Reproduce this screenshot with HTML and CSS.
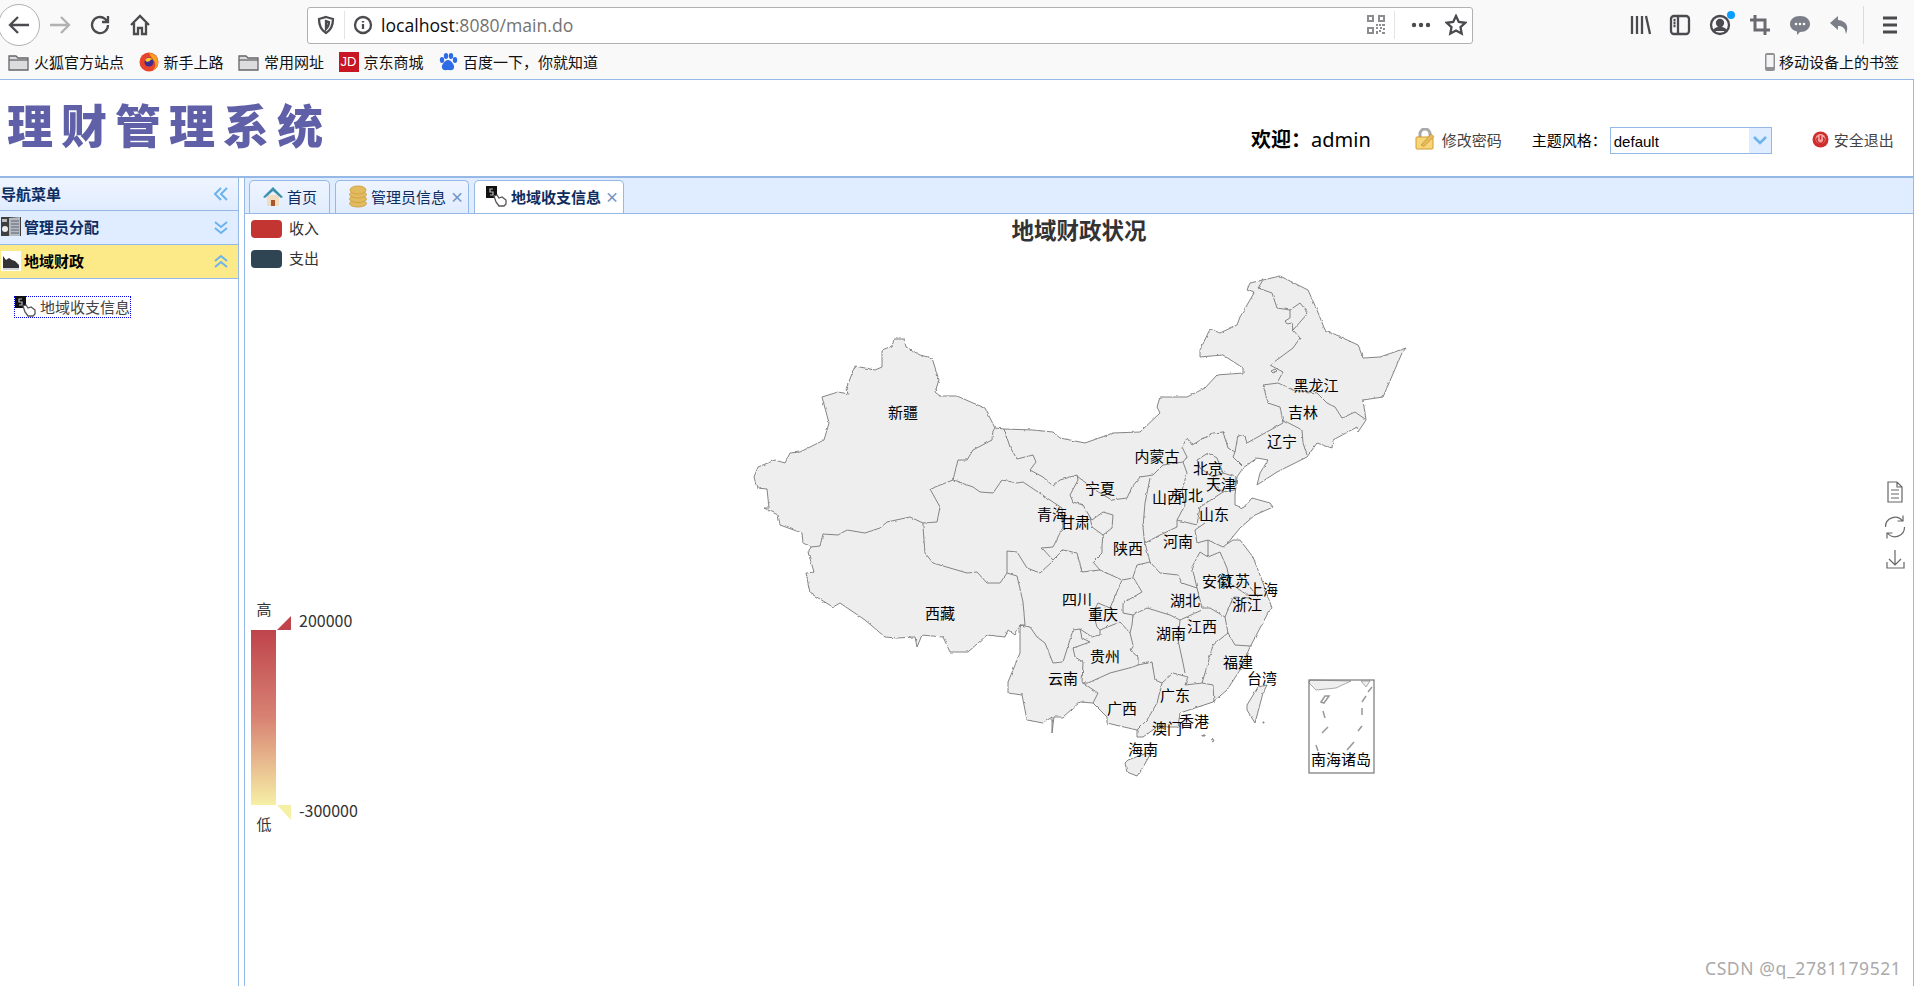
FILE: index.html
```html
<!DOCTYPE html>
<html lang="zh">
<head>
<meta charset="utf-8">
<title>理财管理系统</title>
<link rel="stylesheet" href="styles.css">
</head>
<body>
<div class="toolbar">
  <button class="backbtn"><svg width="24" height="24" viewBox="0 0 24 24" class="ic"><path d="M22 12H3M11 4l-8 8 8 8"/></svg></button>
  <svg class="tb fwd" width="24" height="24" viewBox="0 0 24 24"><path d="M2 12h19M13 4l8 8-8 8"/></svg>
  <svg class="tb reload" width="24" height="24" viewBox="0 0 24 24"><path d="M20 12a8 8 0 1 1-3-6.200L20 9M20 3v6h-6"/></svg>
  <svg class="tb home" width="24" height="24" viewBox="0 0 24 24"><path d="M3 12 12 3l9 9M6 10v11h4v-6h4v6h4V10"/></svg>
  <div class="urlbar">
    <svg class="tb shield" width="20" height="20" viewBox="0 0 20 20"><path d="M10 2l7 2c0 7-2 11-7 14C5 15 3 11 3 4zM10 6l3 1c0 3-1 5-3 7z"/></svg>
    <span class="urlsep"></span>
    <svg class="tb info" width="20" height="20" viewBox="0 0 20 20"><circle cx="10" cy="10" r="8"/><path d="M10 9v5M10 6v1.500"/></svg>
    <span class="url">localhost<span class="urlgray">:8080/main.do</span></span>
    <svg class="qr" width="20" height="22" viewBox="0 0 20 22"><path d="M1 1h7v7H1zM12 1h7v7h-7zM1 13h7v7H1zM10 10h2v2h-2zM13 10h2v2h-2zM16 10h3v2h-3zM10 13h2v2h-2zM14 13h2v2h-2zM17 14h2v2h-2zM10 17h2v3h-2zM13 16h2v2h-2zM16 18h3v2h-3z"/><path d="M3 3h3v3H3zM14 3h3v3h-3zM3 15h3v3H3z" fill="#fff"/></svg>
    <span class="urlsep sep2"></span>
    <svg class="dots" width="20" height="6" viewBox="0 0 20 6"><circle cx="3" cy="3" r="2.200"/><circle cx="10" cy="3" r="2.200"/><circle cx="17" cy="3" r="2.200"/></svg>
    <svg class="tb star" width="22" height="22" viewBox="0 0 22 22"><path d="M11 2l2.800 6 6.400.8-4.700 4.400 1.200 6.400L11 16.500 5.300 19.600l1.200-6.400L1.800 8.800 8.200 8z"/></svg>
  </div>
  <div class="tbright">
    <svg class="tb" width="24" height="24" viewBox="0 0 24 24"><path d="M4 3v18M9 3v18M14 3v18M18 3l4 18"/></svg>
    <svg class="tb" width="24" height="24" viewBox="0 0 24 24"><rect x="3" y="3" width="18" height="18" rx="3"/><path d="M10 3v18M5.500 7h2M5.500 10h2M5.500 13h2"/></svg>
    <span class="acct"><svg class="tb" width="24" height="24" viewBox="0 0 24 24"><circle cx="12" cy="12" r="9"/><circle cx="12" cy="10" r="3" class="solid"/><path d="M6 18c2-4 10-4 12 0" class="solid"/></svg><i class="acctdot"></i></span>
    <svg class="tb cropic" width="24" height="24" viewBox="0 0 24 24"><path d="M7 2v15h15M2 7h15v15"/></svg>
    <svg class="graysolid" width="24" height="24" viewBox="0 0 24 24"><path d="M12 3c6 0 10 3.500 10 8s-4 8-10 8l-3 3v-3.500C5 17.500 2 15 2 11c0-4.500 4-8 10-8z"/><circle cx="8" cy="11" r="1.300" fill="#f9f9fa"/><circle cx="12" cy="11" r="1.300" fill="#f9f9fa"/><circle cx="16" cy="11" r="1.300" fill="#f9f9fa"/></svg>
    <svg class="graysolid" width="24" height="24" viewBox="0 0 24 24"><path d="M10 3 2 10l8 7v-4c4 0 7 1 8 8 3-7 1-13-8-14z"/></svg>
    <span class="tbsep"></span>
    <svg class="tb menu" width="24" height="24" viewBox="0 0 24 24"><path d="M5 5h14M5 12h14M5 19h14"/></svg>
  </div>
</div>
<div class="bookmarks">
  <span class="bm"><svg class="fld" width="21" height="19" viewBox="0 0 21 19"><path d="M1 17V3h7l2 2h10v12z"/><path d="M1 7h19"/></svg>火狐官方站点</span>
  <span class="bm"><svg width="20" height="20" viewBox="0 0 20 20"><circle cx="10" cy="10" r="9.500" fill="#e8442b"/><path d="M10 1a9 9 0 0 1 9 9c0 4-2 7-5 8 3-3 3-7 1-9-1-2-3-4-5-8z" fill="#f9a11b"/><circle cx="10" cy="10" r="4.500" fill="#3d2c92"/><path d="M6 8c2-3 6-3 8 0-2-1-3 0-3 1l-3 1z" fill="#ffcb2b"/></svg>新手上路</span>
  <span class="bm"><svg class="fld" width="21" height="19" viewBox="0 0 21 19"><path d="M1 17V3h7l2 2h10v12z"/><path d="M1 7h19"/></svg>常用网址</span>
  <span class="bm"><span class="jd">JD</span>京东商城</span>
  <span class="bm"><svg width="20" height="20" viewBox="0 0 20 20"><g fill="#2e6be6"><ellipse cx="4" cy="8" rx="2.200" ry="3"/><ellipse cx="8" cy="4" rx="2.200" ry="3"/><ellipse cx="13" cy="4" rx="2.200" ry="3"/><ellipse cx="17" cy="8" rx="2.200" ry="3"/><path d="M10 8c3 0 7 5 6 8-1 3-4 2-6 2s-5 1-6-2c-1-3 3-8 6-8z"/></g></svg>百度一下，你就知道</span>
  <span class="bm mobile"><svg width="12" height="20" viewBox="0 0 12 20"><rect x="1" y="1" width="10" height="18" rx="2" fill="#8f8f94"/><rect x="2.500" y="3" width="7" height="12" fill="#f4f4f5"/></svg>移动设备上的书签</span>
</div>
<header class="header">
  <div class="logo">理财管理系统</div>
  <div class="welcome"><b>欢迎：</b>admin</div>
  <a class="hlink pw"><svg width="22" height="22" viewBox="0 0 22 22"><path d="M5 10V6a5 5 0 0 1 10 0v4" fill="none" stroke="#a9a9a9" stroke-width="3"/><rect x="1" y="9" width="17" height="12" rx="1" fill="#f6d679" stroke="#d39a2c"/><path d="M6 17l10-11 3 2.500-10 10z" fill="#e8b95a" stroke="#b78a2e" stroke-width=".6"/></svg>修改密码</a>
  <span class="themelabel">主题风格：</span>
  <div class="themeselect"><span class="themeval">default</span><span class="themearrow"><svg width="18" height="10" viewBox="0 0 18 10"><path d="M3 1l6 6 6-6" fill="none" stroke="#6cb3ee" stroke-width="2.500"/></svg></span></div>
  <a class="hlink exit"><svg width="17" height="17" viewBox="0 0 17 17"><circle cx="8.500" cy="8.500" r="8" fill="#cf2d2d"/><circle cx="8.500" cy="8" r="5" fill="#f3a3a3"/><path d="M5.800 6.500a3.500 3.500 0 1 0 5.400 0M8.500 4.500v4" fill="none" stroke="#c22" stroke-width="1.400"/></svg>安全退出</a>
</header>
<div class="main">
  <aside class="side">
    <div class="sidehead"><span>导航菜单</span><svg width="16" height="16" viewBox="0 0 16 16" class="chev"><path d="M8 2 2 8l6 6M14 2 8 8l6 6"/></svg></div>
    <div class="acc"><span class="accl"><svg width="20" height="19" viewBox="0 0 20 19"><rect width="20" height="19" fill="#3f3f3f"/><path d="M8 1l11-1v19H8z" fill="#b4bac2"/><path d="M10 4h8M10 7h8M10 10h8M10 13h8M10 16h8" stroke="#5f6670"/><circle cx="4" cy="12" r="3" fill="#eee"/><rect x="1" y="2" width="5" height="3" fill="#bbb"/></svg>管理员分配</span><svg width="16" height="16" viewBox="0 0 16 16" class="chev"><path d="M2 3l6 5 6-5M2 9l6 5 6-5"/></svg></div>
    <div class="acc open"><span class="accl"><svg width="20" height="20" viewBox="0 0 20 20"><rect width="20" height="20" fill="#fff"/><path d="M2 17V5l3 4 3-2 3 2 3 1 4 4v3z" fill="#333"/><path d="M2 18h16" stroke="#aaa"/></svg>地域财政</span><svg width="16" height="16" viewBox="0 0 16 16" class="chev"><path d="M2 8l6-5 6 5M2 14l6-5 6 5"/></svg></div>
    <div class="tree"><a class="treeitem"><svg width="22" height="21" viewBox="0 0 22 21"><rect x="0" y="0" width="11" height="12" fill="#111"/><path d="M7 3H4v3h3v3H4" fill="none" stroke="#bbb" stroke-width="1.200"/><path d="M8 10l3-1 2 3 3-1 4 3v4l-2 2h-5l-3-4z" fill="#fff" stroke="#555" stroke-width="1.300"/></svg><span>地域收支信息</span></a></div>
  </aside>
  <div class="splitter"></div>
  <section class="content">
    <nav class="tabs">
      <div class="tab t1"><svg width="22" height="22" viewBox="0 0 22 22"><path d="M5 10h12v11H5z" fill="#f1dcc0"/><path d="M1 12 11 2l10 10-2 1-8-7-8 7z" fill="#3a8fb0"/><rect x="9" y="15" width="4" height="6" fill="#a8542c"/></svg>首页</div>
      <div class="tab t2"><svg width="20" height="23" viewBox="0 0 20 23"><g fill="#e2bb5e" stroke="#cfa548"><ellipse cx="10" cy="18.500" rx="8.500" ry="3.500"/><ellipse cx="10" cy="14" rx="8.500" ry="3.500"/><ellipse cx="10" cy="9.500" rx="8.500" ry="3.500"/><ellipse cx="10" cy="5" rx="8" ry="4"/></g></svg>管理员信息<i class="x">×</i></div>
      <div class="tab active"><svg width="22" height="21" viewBox="0 0 22 21"><rect x="0" y="0" width="11" height="12" fill="#111"/><path d="M7 3H4v3h3v3H4" fill="none" stroke="#bbb" stroke-width="1.200"/><path d="M8 10l3-1 2 3 3-1 4 3v4l-2 2h-5l-3-4z" fill="#fff" stroke="#555" stroke-width="1.300"/></svg>地域收支信息<i class="x">×</i></div>
    </nav>
    <div class="chart">
      <svg class="mapsvg" width="1668" height="772" viewBox="245 214 1668 772">
        <defs>
          <filter id="rough" x="-2%" y="-2%" width="104%" height="104%" color-interpolation-filters="sRGB">
            <feTurbulence type="fractalNoise" baseFrequency="0.2" numOctaves="2" seed="4"/>
            <feDisplacementMap in="SourceGraphic" scale="2.500" xChannelSelector="R" yChannelSelector="G"/>
          </filter>
          <linearGradient id="vm" x1="0" y1="0" x2="0" y2="1"><stop offset="0" stop-color="#bf444c"/><stop offset=".5" stop-color="#d88273"/><stop offset="1" stop-color="#f6efa6"/></linearGradient>
        </defs>
        <g class="legend">
          <rect x="251" y="220" width="31" height="18" rx="4" fill="#c23531"/>
          <rect x="251" y="250" width="31" height="18" rx="4" fill="#2f4554"/>
          <text x="289" y="234">收入</text>
          <text x="289" y="264">支出</text>
        </g>
        <text class="charttitle" x="1079" y="239">地域财政状况</text>
        <g class="vmap">
          <rect x="251" y="630" width="25" height="175" fill="url(#vm)"/>
          <path d="M277 630 291 616V630Z" fill="#bf444c"/>
          <path d="M277 805H291V820Z" fill="#f6efa6"/>
          <text x="264" y="615" class="mid">高</text>
          <text x="264" y="830" class="mid">低</text>
          <text x="299" y="627" class="num">200000</text>
          <text x="299" y="817" class="num">-300000</text>
        </g>
        <g filter="url(#rough)" class="map">
          <path class="land" d="M995 428 985 408 973 403 957 396 940 396 935 392 939 380 932 358 920 355 906 347 904 339 894 339 892 346 882 350 882 367 875 370 855 366 846 389 849 394 838 392 822 397 829 423 824 440 800 452 790 453 785 463 775 460 758 467 754 477 757 488 767 489 769 508 764 508 778 515 780 525 802 533 803 543 811 547 808 552 814 572 806 573 810 593 833 607 840 603 865 620 885 637 897 638 915 637 917 647 922 635 943 637 950 652 968 652 987 635 1005 637 1008 630 1015 635 1020 625 1020 653 1008 682 1008 693 1022 695 1027 720 1043 723 1052 717 1052 733 1054 717 1063 717 1080 702 1093 703 1107 717 1107 723 1137 730 1137 737 1143 737 1157 727 1178 727 1180 713 1213 702 1227 690 1240 670 1250 647 1268 613 1272 608 1263 583 1253 557 1240 540 1233 540 1227 544 1240 528 1255 515 1273 507 1270 503 1252 498 1243 508 1235 505 1235 495 1237 477 1243 468 1257 458 1268 460 1260 473 1257 485 1277 472 1307 457 1317 443 1332 448 1333 440 1357 427 1358 432 1366 420 1363 400 1383 397 1402 353 1406 348 1380 357 1363 358 1358 345 1330 332 1325 330 1317 310 1308 290 1280 276 1263 280 1250 283 1247 290 1254 293 1240 317 1237 325 1220 333 1210 329 1200 350 1200 357 1223 355 1243 368 1243 373 1217 375 1205 388 1187 397 1160 397 1157 407 1160 413 1140 432 1113 433 1085 443 1060 438 1053 432 1033 430 1004 429Z"/>
          <path class="land" d="M1267 685 1258 687 1247 705 1247 710 1255 723 1263 693Z"/>
          <path class="land" d="M1128 760 1147 753 1150 755 1143 767 1137 776 1127 772 1125 763Z"/>
          <path class="land" d="M1212 739l2 1-1 2-2-1zM1203 735l2 0 0 1-2 0zM1262 722l2 0 0 1-2 0z"/>
          <path class="line" d="M995 428 993 431 992 440 973 450 967 460 958 460 953 480 930 489 940 507 937 522 923 523 910 517 887 522 880 528 865 533 847 530 838 535 823 534 820 546 811 547"/>
          <path class="line" d="M923 523 923 527 925 553 933 563 967 573 977 572 987 583 1000 583 1007 573 1017 576 1023 602 1025 625 1020 625"/>
          <path class="line" d="M1004 429 1010 447 1017 459 1033 455 1036 462 1030 470 1043 477 1053 486 1060 480 1077 475 1078 480 1070 495 1073 502 1083 505 1090 517 1092 527 1103 535"/>
          <path class="line" d="M1077 476 1095 490 1112 500 1127 498 1132 487 1140 477 1153 475 1163 465 1183 462 1187 457 1182 447 1187 438 1192 445 1213 433 1223 432 1228 448 1235 452 1238 435 1245 437 1247 443 1283 423"/>
          <path class="line" d="M1283 420 1302 430 1303 443 1307 455M1235 452 1233 457 1243 467"/>
          <path class="line" d="M1283 422 1280 407 1268 403 1263 385 1278 383 1293 390 1317 393 1327 403 1335 407 1342 418 1355 412 1365 419"/>
          <path class="line" d="M1278 381 1283 372 1270 365 1293 348 1300 338 1293 330 1308 313 1300 303 1290 310 1277 308 1272 293 1258 288 1263 280"/>
          <path class="line" d="M1290 310 1290 318 1285 321 1287 324 1292 323 1293 330M1271 371l4-2 2 2-4 2z"/>
          <path class="line" d="M1208 453 1217 458 1223 473 1213 477 1200 468 1197 460ZM1223 473 1236 477 1235 490 1223 492 1213 485 1213 477"/>
          <path class="line" d="M1183 462 1187 473 1182 490 1185 505 1177 520 1177 527 1160 535 1145 543M1150 478 1145 503 1143 527 1145 547"/>
          <path class="line" d="M1177 520 1197 525 1200 507 1223 492M1205 523 1195 530 1197 543 1208 540 1223 547 1227 544"/>
          <path class="line" d="M1145 543 1150 562 1160 573 1178 575 1182 583 1197 588 1192 567 1200 552 1208 557 1208 540"/>
          <path class="line" d="M1208 557 1220 552 1227 568 1230 583 1247 595 1263 595M1233 597 1250 598M1250 587 1258 597"/>
          <path class="line" d="M1197 588 1202 608 1210 608 1225 617 1233 598M1225 617 1228 633 1213 645 1208 663 1202 683 1213 685 1214 702M1228 633 1235 645 1250 646"/>
          <path class="line" d="M1202 683 1185 685 1188 677 1173 673 1162 683 1155 680 1152 662 1138 665 1138 657 1130 650 1133 645 1130 633"/>
          <path class="line" d="M1180 620 1178 640 1183 663 1185 673M1180 620 1202 610M1180 620 1170 615 1147 608 1133 615 1123 613 1123 603 1142 592 1133 577 1137 565 1150 562"/>
          <path class="line" d="M1133 615 1132 625 1130 633 1120 622 1100 630 1100 635 1092 637 1080 629 1073 630 1063 662 1053 663 1045 643 1037 637 1030 627 1020 625"/>
          <path class="line" d="M1133 578 1122 580 1110 608 1098 603 1093 613 1097 627 1100 630M1122 580 1100 570 1082 572 1077 553 1063 550 1053 560 1042 548 1053 547 1063 527 1062 508 1035 490 1023 482 1017 483 1002 480 993 493 980 492 973 487 953 480"/>
          <path class="line" d="M1007 573 1007 551 1017 552 1027 568 1040 573 1053 561M1100 570 1093 562 1102 553 1102 545 1103 535 1112 528 1113 515 1103 512 1092 520 1090 517"/>
          <path class="line" d="M1080 629 1082 638 1090 642 1073 648 1075 657 1083 662 1082 683 1088 683 1110 673 1133 667 1138 665M1083 683 1098 693 1093 703M1162 683 1157 703 1147 720 1137 730"/>
        </g>
        <g class="inset">
          <path d="M1309 683 1316 690 1336 688 1351 681 1310 680ZM1361 681 1366 687 1370 681Z" fill="#eee" stroke="#888" stroke-width=".7"/>
          <rect x="1309" y="680" width="65" height="93" fill="none" stroke="#777" stroke-width="1.200"/>
          <path d="M1321 702 1325 696 1329 696 1324 703ZM1323 711l2 7M1322 733l6-6M1316 745l2 6M1347 750l7-8M1358 731l4-5M1362 708v7M1362 702l4-6M1368 692l4-5" fill="none" stroke="#999" stroke-width="1.500"/>
        </g>
        <g class="labels">
          <text x="903" y="418">新疆</text><text x="940" y="619">西藏</text><text x="1052" y="520">青海</text><text x="1075" y="528">甘肃</text>
          <text x="1077" y="605">四川</text><text x="1100" y="494">宁夏</text><text x="1157" y="462">内蒙古</text><text x="1128" y="554">陕西</text>
          <text x="1167" y="503">山西</text><text x="1188" y="501">河北</text><text x="1208" y="474">北京</text><text x="1221" y="490">天津</text>
          <text x="1214" y="520">山东</text><text x="1178" y="547">河南</text><text x="1282" y="447">辽宁</text><text x="1303" y="418">吉林</text>
          <text x="1316" y="391">黑龙江</text><text x="1217" y="587">安徽</text><text x="1235" y="586">江苏</text><text x="1263" y="595">上海</text>
          <text x="1247" y="610">浙江</text><text x="1185" y="606">湖北</text><text x="1103" y="620">重庆</text><text x="1171" y="639">湖南</text>
          <text x="1202" y="632">江西</text><text x="1105" y="662">贵州</text><text x="1238" y="668">福建</text><text x="1262" y="684">台湾</text>
          <text x="1063" y="684">云南</text><text x="1175" y="701">广东</text><text x="1122" y="714">广西</text><text x="1194" y="727">香港</text>
          <text x="1167" y="734">澳门</text><text x="1143" y="755">海南</text><text x="1341" y="765">南海诸岛</text>
        </g>
        <g class="toolbox">
          <path d="M1888 482h9l5 5v15h-14zM1897 482v5h5M1891 490h8M1891 494h8M1891 498h8"/>
          <path d="M1885.500 527a9.500 9.500 0 0 1 17-6M1904.500 527a9.500 9.500 0 0 1-17 6M1903 515.500v5.500h-5.500M1887 538.500v-5.500h5.500"/>
          <path d="M1895 550v15M1889 559l6 6 6-6M1887 562v6h17v-6"/>
        </g>
      </svg>
    </div>
  </section>
</div>
<div class="watermark">CSDN @q_2781179521</div>
</body>
</html>
```
FILE: styles.css
```css
* { box-sizing: border-box; }
html, body { margin: 0; padding: 0; }
body {
  width: 1914px;
  height: 986px;
  overflow: hidden;
  position: relative;
  background: #fff;
  color: #000;
  font-family: "Noto Sans CJK SC", "Noto Sans", sans-serif;
  display: flex;
  flex-direction: column;
}
svg { display: block; flex: none; }
.tb, .ic { fill: none; stroke: #4a4a4f; stroke-width: 2.300; }
.toolbar {
  height: 50px;
  flex: none;
  display: flex;
  align-items: center;
  background: #f9f9fa;
}
.backbtn {
  width: 42px;
  height: 42px;
  margin-left: -2px;
  border-radius: 50%;
  border: 1px solid #b1b1b3;
  background: #fff;
  padding: 0;
  display: flex;
  align-items: center;
  justify-content: center;
}
.fwd { margin-left: 8px; stroke: #b1b1b3; }
.reload { margin-left: 16px; }
.home { margin-left: 16px; }
.urlbar {
  margin-left: 155px;
  width: 1166px;
  height: 37px;
  border: 1px solid #b1b1b3;
  border-radius: 3px;
  background: #fff;
  display: flex;
  align-items: center;
}
.shield { margin-left: 8px; }
.urlsep { width: 1px; height: 28px; background: #e4e4e6; margin-left: 8px; }
.info { margin-left: 8px; }
.url { margin-left: 8px; font: 17.600px "Open Sans", sans-serif; color: #0c0c0d; white-space: nowrap; }
.urlgray { color: #737373; }
.qr { margin-left: auto; fill: #8d8d91; }
.sep2 { margin-left: 8px; }
.dots { margin-left: 16px; fill: #4a4a4f; }
.star { margin-left: 14px; margin-right: 5px; }
.tbright {
  margin-left: 155px;
  display: flex;
  align-items: center;
  gap: 16px;
}
.acct { position: relative; display: block; }
.acctdot {
  position: absolute;
  right: -3px;
  top: -2px;
  width: 8px;
  height: 8px;
  border-radius: 50%;
  background: #0a9dff;
}
.solid { fill: #4a4a4f; }
.cropic { stroke: #6a6a70; stroke-width: 3; }
.graysolid { fill: #7b7f88; }
.tbsep { width: 1px; height: 38px; background: #dcdcde; margin-left: -5px; }
.menu { stroke-width: 3; margin-left: -2px; }
.bookmarks {
  height: 29px;
  flex: none;
  display: flex;
  align-items: center;
  background: #f9f9fa;
  padding: 0 0 5px 8px;
  font-size: 15px;
  color: #111;
}
.bm { display: flex; align-items: center; gap: 5px; margin-right: 14.500px; white-space: nowrap; line-height: 20px; }
.bm.mobile { margin-left: auto; margin-right: 15px; gap: 3px; }
.fld { fill: #dcdcde; stroke: #66666a; stroke-width: 1.300; }
.jd {
  width: 20px;
  height: 20px;
  background: #c91623;
  color: #fff;
  font-size: 13px;
  line-height: 20px;
  text-align: center;
  font-family: "Liberation Sans", sans-serif;
}
.header {
  height: 99px;
  flex: none;
  border-top: 1px solid #95b8e7;
  border-right: 1px solid #95b8e7;
  border-bottom: 2px solid #95b8e7;
  display: flex;
  align-items: center;
  font-size: 15px;
  position: relative;
}
.logo {
  margin-left: 7px;
  margin-top: -10px;
  width: 330px;
  font-size: 46px;
  line-height: 56px;
  font-weight: 900;
  letter-spacing: 8px;
  color: #6060a8;
  white-space: nowrap;
  filter: blur(.5px);
}
.welcome { margin-left: 914px; margin-top: 23px; font-size: 20px; line-height: 26px; white-space: nowrap; font-family: "Noto Sans", "Noto Sans CJK SC", sans-serif; }
.welcome b { font-family: "Noto Sans CJK SC", sans-serif; }
.hlink { display: flex; align-items: center; gap: 5px; color: #444; white-space: nowrap; margin-top: 22px; }
.pw { margin-left: 44px; }
.themelabel { margin-left: 30px; margin-top: 22px; white-space: nowrap; }
.themeselect {
  margin-left: 3px;
  margin-top: 25px;
  width: 162px;
  height: 27px;
  border: 1px solid #95b8e7;
  display: flex;
  justify-content: space-between;
  align-items: stretch;
}
.themeval { padding-left: 3px; font: 15px/27px "Liberation Sans", sans-serif; }
.themearrow { width: 22px; background: #e0ecff; display: flex; align-items: center; justify-content: center; }
.exit { margin-left: 40px; }
.main { flex: 1; display: flex; min-height: 0; }
.side { width: 239px; flex: none; border-right: 1px solid #95b8e7; font-size: 15px; }
.sidehead {
  height: 33px;
  background: linear-gradient(#eff5ff, #e0ecff);
  border-bottom: 1px solid #95b8e7;
  display: flex;
  align-items: center;
  justify-content: space-between;
  padding: 0 9px 1px 1px;
  font-weight: 700;
  color: #0e2d5f;
}
.chev { fill: none; stroke: #6cb3ee; stroke-width: 2; }
.acc {
  height: 34px;
  background: #e0ecff;
  border-bottom: 1px solid #95b8e7;
  display: flex;
  align-items: center;
  justify-content: space-between;
  padding: 0 9px 2px 1px;
  font-weight: 700;
  color: #0e2d5f;
}
.acc.open { background: #fbea87; color: #000; }
.accl { display: flex; align-items: center; gap: 3px; }
.tree { padding: 17px 0 0 14px; }
.treeitem {
  width: 117px;
  height: 22px;
  border: 1px dotted #0000e0;
  display: flex;
  align-items: center;
  gap: 3px;
  padding-bottom: 2px;
  color: #444;
  white-space: nowrap;
}
.splitter { width: 6px; flex: none; background: #fff; border-right: 1px solid #95b8e7; }
.content { flex: 1; display: flex; flex-direction: column; min-width: 0; border-right: 1px solid #95b8e7; }
.tabs {
  height: 36px;
  flex: none;
  background: #e0ecff;
  border-bottom: 1px solid #95b8e7;
  padding: 2px 0 0 4px;
  display: flex;
  gap: 5px;
  font-size: 15px;
  color: #0e2d5f;
}
.tab {
  height: 33px;
  border: 1px solid #95b8e7;
  border-bottom: 0;
  border-radius: 5px 5px 0 0;
  background: linear-gradient(#eff5ff, #e0ecff);
  display: flex;
  align-items: center;
  padding: 0 0 2px 12px;
  gap: 3px;
  white-space: nowrap;
}
.t1 { width: 81px; }
.t2 { width: 134px; }
.tab.active { width: 150px; background: #fff; font-weight: 700; padding-left: 11px; }
.x { font-style: normal; color: #7394c4; font-size: 14px; font-weight: 700; line-height: 20px; margin-left: 1px; }
.chart { flex: 1; position: relative; min-height: 0; }
.mapsvg { position: absolute; left: 0; top: 0; }
.legend text, .vmap text { font-size: 15px; fill: #333; }
.vmap .mid { text-anchor: middle; }
.vmap .num { font-size: 16px; }
.charttitle { font-size: 22.500px; font-weight: 700; fill: #333; text-anchor: middle; }
.land { fill: #eee; stroke: #777; stroke-width: .9; }
.line { fill: none; stroke: #777; stroke-width: .9; }
.labels text { font-size: 15px; fill: #000; text-anchor: middle; }
.toolbox path { fill: none; stroke: #666; stroke-width: 1.200; }
.watermark {
  position: absolute;
  left: 1705px;
  top: 957px;
  font: 17.500px/22px "Noto Sans", sans-serif;
  color: #aaa;
  letter-spacing: .6px;
  white-space: nowrap;
}
```
